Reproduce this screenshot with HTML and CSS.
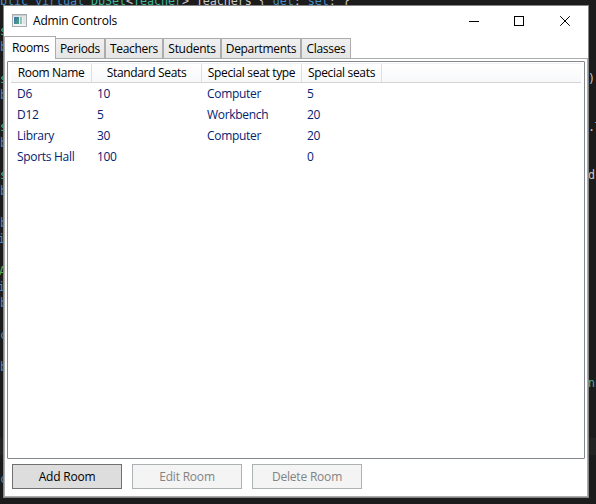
FILE: index.html
```
<!DOCTYPE html>
<html lang="en">
<head>
<meta charset="utf-8">
<title>Admin Controls</title>
<link rel="stylesheet" href="styles.css">
</head>
<body>
<div class="editor" aria-hidden="true">
  <div class="current-line"></div>
  <div class="code top"><i class="kw">blic virtual</i> <i class="type">DbSet</i>&lt;<i class="type">Teacher</i>&gt; Teachers { <i class="kw">get</i>; <i class="kw">set</i>; }</div>
  <span class="code type l1">s</span><span class="code kw l2">b</span>
  <span class="code type l3">s</span><span class="code kw l4">b</span>
  <span class="code type l5">s</span><span class="code kw l6">b</span>
  <span class="code type l7">s</span><span class="code kw l8">b</span>
  <span class="code kw l9">b</span><span class="code kw l10">i</span>
  <span class="code note l11">A</span><span class="code kw l12">i</span><span class="code kw l13">b</span>
  <span class="code kw l14">c</span><span class="code kw l15">b</span><span class="code kw l16">c</span>
  <span class="code r1">)</span><span class="code r2">.T</span><span class="code r3">d<i class="kw">s</i></span><span class="code type r4">nn</span>
</div>
<main class="window">
  <header class="titlebar">
    <svg class="appicon" width="15" height="13" viewBox="0 0 15 13">
      <defs><linearGradient id="screen" x1="0" y1="0" x2="1" y2="1"><stop offset="0" stop-color="#3c6fb4"/><stop offset="1" stop-color="#4aa878"/></linearGradient></defs>
      <rect x=".5" y=".5" width="14" height="12" fill="#f1f3f5" stroke="#a6abb0"/>
      <rect x="1" y="1" width="13" height="1.4" fill="#c8cdd2"/>
      <rect x="2" y="3" width="5" height="7" fill="url(#screen)"/>
      <rect x="8" y="3" width="2" height="7" fill="#8fc3b5"/>
      <rect x="11" y="3" width="2.5" height="7" fill="#dde1e4"/>
    </svg>
    <h1 class="title">Admin Controls</h1>
    <svg class="controls" width="103" height="12" viewBox="0 0 103 12" fill="none" stroke="#000">
      <path d="M0 6.5h10M45.5 1.5h9v9h-9z" shape-rendering="crispEdges"/>
      <path d="M91.2 1.2l9.6 9.6M100.8 1.2l-9.6 9.6"/>
    </svg>
  </header>
  <nav class="tabs">
    <span class="tab selected">Rooms</span><span class="tab periods">Periods</span><span class="tab teachers">Teachers</span><span class="tab students">Students</span><span class="tab departments">Departments</span><span class="tab classes">Classes</span>
  </nav>
  <section class="page">
    <div class="list">
      <div class="row head"><span>Room Name</span><span>Standard Seats</span><span>Special seat type</span><span>Special seats</span></div>
      <div class="row"><span>D6</span><span>10</span><span>Computer</span><span>5</span></div>
      <div class="row"><span>D12</span><span>5</span><span>Workbench</span><span>20</span></div>
      <div class="row"><span>Library</span><span>30</span><span>Computer</span><span>20</span></div>
      <div class="row"><span>Sports Hall</span><span>100</span><span></span><span>0</span></div>
    </div>
    <div class="actions">
      <button class="button">Add Room</button>
      <button class="button" disabled>Edit Room</button>
      <button class="button" disabled>Delete Room</button>
    </div>
  </section>
</main>
</body>
</html>
```
FILE: styles.css
```
* { box-sizing: border-box; }
body {
  margin: 0;
  width: 596px;
  height: 504px;
  overflow: hidden;
  background: #1c1c1c;
  font: 12px/16px "Open Sans", "Noto Sans", sans-serif;
  letter-spacing: -0.3px;
  color: #000;
}

/* Code editor showing behind the window */
.editor { position: absolute; inset: 0; overflow: hidden; }
.current-line { position: absolute; top: 438px; width: 100%; height: 17px; background: #232323; }
.code {
  position: absolute;
  left: 0;
  font: 11.75px/16px "DejaVu Sans Mono", monospace;
  letter-spacing: 0;
  color: #c8c8c8;
  white-space: pre;
}
.code i { font-style: normal; }
.kw { color: #478bc4; }
.type { color: #3fb797; }
.note { color: #57a64a; }
.top { top: -7px; left: 0; letter-spacing: -0.08px; }
.l1 { top: 23px; } .l2 { top: 39px; }
.l3 { top: 71px; } .l4 { top: 87px; }
.l5 { top: 119px; } .l6 { top: 135px; }
.l7 { top: 167px; } .l8 { top: 183px; }
.l9 { top: 215px; } .l10 { top: 231px; left: -2px; }
.l11 { top: 263px; left: -1px; } .l12 { top: 279px; left: -2px; } .l13 { top: 295px; }
.l14 { top: 327px; } .l15 { top: 359px; } .l16 { top: 471px; }
.r1, .r2, .r3, .r4 { left: 588px; }
.r1 { top: 71px; } .r2 { top: 119px; } .r3 { top: 167px; } .r4 { top: 375px; }

.window {
  position: relative;
  display: flex;
  flex-direction: column;
  width: 586px;
  height: 493px;
  margin: 5px 0 0 3px;
  border: 1px solid #858585;
  background: #fff;
}
.titlebar { display: flex; align-items: center; height: 30px; padding: 0 16px 0 8px; }
.appicon { margin-top: -1px; }
.title { margin: 0 0 0 6px; font-size: 12px; font-weight: 400; letter-spacing: -0.2px; }
.controls { margin-left: auto; margin-top: -1px; }

.tabs { display: flex; align-items: flex-end; height: 23px; margin-bottom: -1px; }
.tab {
  height: 21px;
  border: 1px solid #acacac;
  background: linear-gradient(#f0f0f0, #e5e5e5);
  text-align: center;
  line-height: 20px;
  white-space: nowrap;
}
.tab.selected { z-index: 1; width: 52px; height: 23px; border-bottom: 0; background: #fff; line-height: 22px; padding-left: 1px; }
.periods { width: 49px; border-left: 0; }
.teachers { width: 58px; }
.students { width: 58px; }
.departments { width: 80px; }
.classes { width: 50px; }

.page { flex: 1; border: 1px solid #acacac; padding: 2px; }
.list { height: 398px; width: 578px; border: 1px solid #828790; border-radius: 1px; padding: 1px 3px; }
.row { display: grid; grid-template-columns: 80px 110px 100px 80px; height: 21px; color: #042271; line-height: 21px; }
.row span { padding-left: 6px; white-space: nowrap; }
.row.head {
  grid-template-columns: 81px 110px 100px 80px;
  height: 20px;
  border-top: 1px solid #f2f2f2;
  border-bottom: 1px solid #d5d5d5;
  background: linear-gradient(#fff, #f7f8fa);
  color: #000;
  line-height: 18px;
}
.row.head span { padding: 0; border-right: 1px solid #dedfe1; text-align: center; letter-spacing: -0.33px; }

.actions { display: flex; gap: 10px; padding: 5px 0 0 5px; }
.button {
  width: 110px;
  height: 25px;
  padding: 0;
  border: 1px solid #707070;
  border-radius: 0;
  background: #ddd;
  color: #000;
  font: inherit;
  letter-spacing: -0.2px;
}
.button:disabled { border-color: #adb2b5; background: #f4f4f4; color: #838383; }
```
